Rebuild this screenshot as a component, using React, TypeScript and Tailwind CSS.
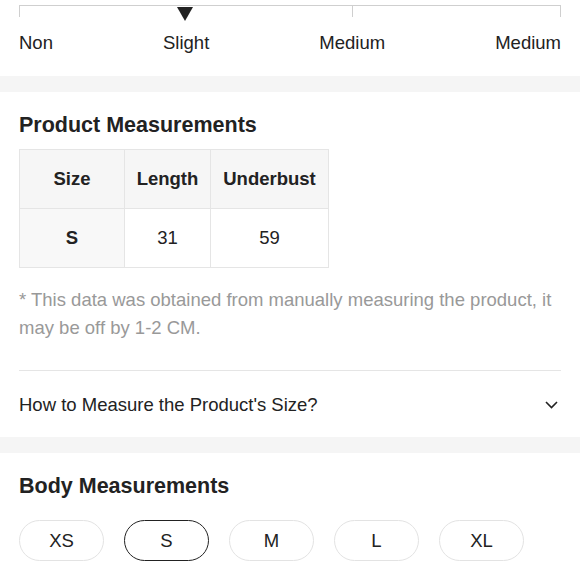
import React from "react";

const labels = ["Non", "Slight", "Medium", "Medium"];
const sizes = ["XS", "S", "M", "L", "XL"];

const FitScale = () => (
  <div className="px-[19px] pt-[5px] pb-[22px]">
    <div className="relative flex h-[12px]">
      <div className="w-[333px] border-t border-l border-[#cfcfcf]" />
      <div className="flex-1 border-t border-l border-r border-[#cfcfcf]" />
      <svg
        className="absolute left-[158px] top-[2px]"
        width="16"
        height="14"
        viewBox="0 0 16 14"
      >
        <path d="M0 0 H16 L8 14 Z" fill="#222" />
      </svg>
    </div>
    <div className="mt-[15px] flex justify-between text-[18.5px] leading-[22px] text-[#222]">
      {labels.map((l, i) => (
        <span key={i}>{l}</span>
      ))}
    </div>
  </div>
);

const ProductTable = () => {
  const cell = "flex items-center justify-center border-r border-b border-[#e5e5e5] h-[59px]";
  return (
    <div className="mt-[11px] w-[310px] border-t border-l border-[#e5e5e5] grid grid-cols-[105px_86px_118px] text-[18.5px] text-[#222]">
      <div className={`${cell} bg-[#f6f6f6] font-bold`}>Size</div>
      <div className={`${cell} bg-[#f6f6f6] font-bold`}>Length</div>
      <div className={`${cell} bg-[#f6f6f6] font-bold`}>Underbust</div>
      <div className={`${cell} bg-[#f8f8f8] font-bold`}>S</div>
      <div className={cell}>31</div>
      <div className={cell}>59</div>
    </div>
  );
};

export default function App() {
  return (
    <div className="w-full bg-white font-['Liberation_Sans',Arial,sans-serif] text-[#222]">
      <FitScale />
      <div className="h-[16px] bg-[#f5f5f5]" />

      <div className="px-[19px] pt-[20px]">
        <h2 className="text-[21.5px] leading-[26px] font-bold">Product Measurements</h2>
        <ProductTable />
        <p className="mt-[18px] text-[18.5px] leading-[28px] text-[#999]">
          * This data was obtained from manually measuring the product, it may be off by 1-2 CM.
        </p>
        <div className="mt-[28px] h-px bg-[#e5e5e5]" />
        <button className="flex w-full items-center justify-between pt-[23px] pb-[21px] text-left">
          <span className="text-[18.5px] leading-[22px]">How to Measure the Product's Size?</span>
          <svg className="mr-[3px]" width="13" height="8" viewBox="0 0 13 8" fill="none">
            <path d="M1 1 L6.5 6.5 L12 1" stroke="#222" strokeWidth="1.6" />
          </svg>
        </button>
      </div>
      <div className="h-[16px] bg-[#f5f5f5]" />

      <div className="px-[19px] pt-[20px] pb-[18px]">
        <h2 className="text-[21.5px] leading-[26px] font-bold">Body Measurements</h2>
        <div className="mt-[21px] flex gap-[20px]">
          {sizes.map((s) => (
            <div
              key={s}
              className={`flex h-[41px] w-[85px] items-center justify-center rounded-full text-[18.5px] ${
                s === "S" ? "border-[1.5px] border-[#222]" : "border border-[#e3e3e3]"
              }`}
            >
              {s}
            </div>
          ))}
        </div>
      </div>
    </div>
  );
}
